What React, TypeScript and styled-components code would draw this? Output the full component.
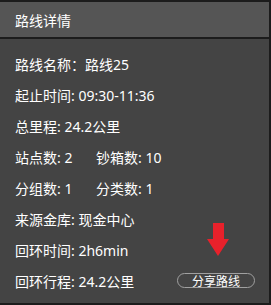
import React from "react";
import styled, { createGlobalStyle } from "styled-components";

const GlobalStyle = createGlobalStyle`
  html, body {
    margin: 0;
    padding: 0;
    background: #1e1e1e;
  }
  * { box-sizing: border-box; }
`;

const Panel = styled.div`
  width: 271px;
  height: 305px;
  display: flex;
  flex-direction: column;
  background: #444444;
  border-top: 2px solid #1c1c1c;
  border-right: 2px solid #1c1c1c;
  border-bottom: 2px solid #1c1c1c;
  font-family: "Noto Sans", "Noto Sans CJK SC", sans-serif;
  color: #ffffff;
`;

const Header = styled.div`
  height: 37px;
  display: flex;
  align-items: center;
  padding: 0 15px;
  background: #555555;
  border-bottom: 2px solid #1c1c1c;
  font-size: 14px;
`;

const Body = styled.div`
  flex: 1;
  padding: 9px 14px 0 15px;
  display: flex;
  flex-direction: column;
`;

const Row = styled.div<{ $split?: boolean }>`
  height: 31px;
  display: grid;
  grid-template-columns: ${(p) => (p.$split ? "81px 1fr" : "1fr auto")};
  align-items: center;
  font-size: 14px;
  white-space: nowrap;
`;

const ShareButton = styled.button`
  width: 78px;
  height: 15px;
  padding: 0;
  border: 1px solid #a0a0a0;
  border-radius: 8px;
  background: transparent;
  color: #ffffff;
  font-family: "Noto Sans CJK SC", sans-serif;
  font-size: 12px;
  line-height: 13px;
  position: relative;
`;

const Arrow = styled.svg`
  position: absolute;
  left: 29px;
  top: -51px;
`;

export default function App() {
  return (
    <>
      <GlobalStyle />
      <Panel>
        <Header>路线详情</Header>
        <Body>
          <Row>路线名称：路线25</Row>
          <Row>起止时间: 09:30-11:36</Row>
          <Row>总里程: 24.2公里</Row>
          <Row $split>
            <span>站点数: 2</span>
            <span>钞箱数: 10</span>
          </Row>
          <Row $split>
            <span>分组数: 1</span>
            <span>分类数: 1</span>
          </Row>
          <Row>来源金库: 现金中心</Row>
          <Row>回环时间: 2h6min</Row>
          <Row>
            <span>回环行程: 24.2公里</span>
            <ShareButton>
              分享路线
              <Arrow width="22" height="34" viewBox="0 0 22 34">
                <path d="M6 0 H17 V16 H22 L11 33 L0 16 H6 Z" fill="#e8212b" />
              </Arrow>
            </ShareButton>
          </Row>
        </Body>
      </Panel>
    </>
  );
}
